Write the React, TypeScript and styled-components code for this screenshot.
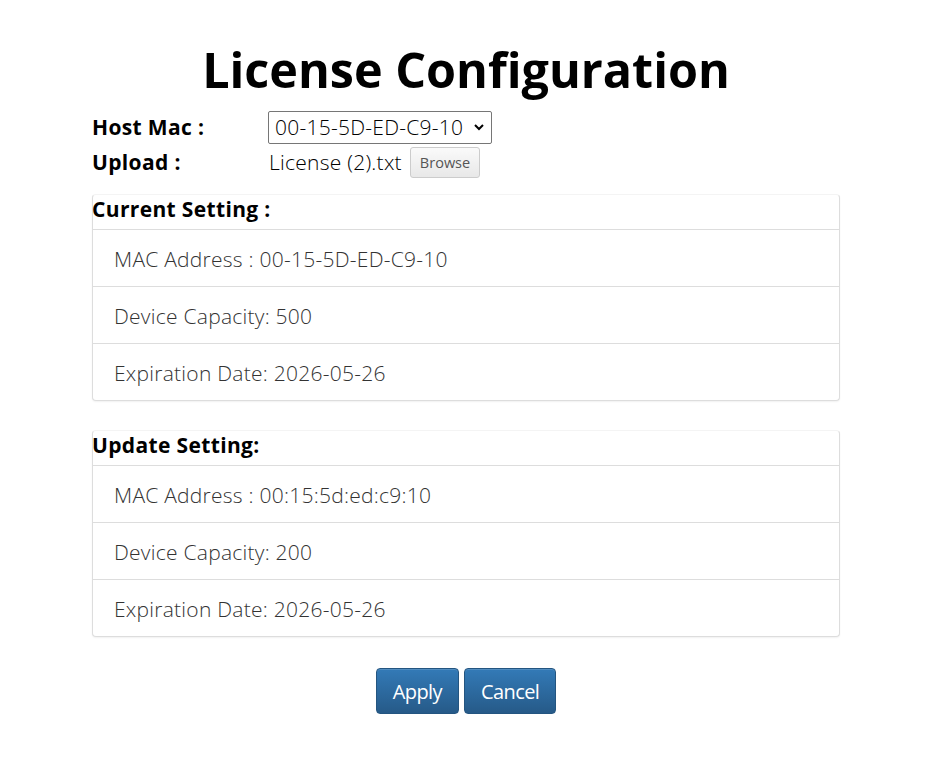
import React from "react";
import styled, { createGlobalStyle } from "styled-components";

const Global = createGlobalStyle`
  html, body { margin: 0; padding: 0; background: #fff; }
  body { font-family: "Open Sans", "Liberation Sans", sans-serif; color: #000; }
`;

const Page = styled.div`
  width: 748px;
  padding: 35px 0 40px 92px;
  display: flex;
  flex-direction: column;
`;

const Title = styled.h1`
  margin: 0;
  text-align: center;
  font-size: 48.5px;
  font-weight: 700;
  line-height: 68px;
`;

const FieldRow = styled.div<{ $h: number; $mt: number }>`
  display: grid;
  grid-template-columns: 176px 1fr;
  align-items: center;
  height: ${(p) => p.$h}px;
  margin-top: ${(p) => p.$mt}px;
`;

const Label = styled.div`
  font-size: 21px;
  font-weight: 700;
  letter-spacing: 0.35px;
`;

const Select = styled.div`
  display: inline-flex;
  align-items: center;
  justify-content: space-between;
  width: 224px;
  height: 33px;
  box-sizing: border-box;
  border: 1px solid #767676;
  border-radius: 2px;
  padding: 0 6px 0 6px;
  font-size: 21px;
  font-weight: 300;
  letter-spacing: 0.25px;
  color: #000;
`;

const FileLine = styled.div`
  display: flex;
  align-items: center;
  gap: 8px;
  font-size: 21px;
  font-weight: 300;
  letter-spacing: 0.25px;
  padding-left: 1px;
`;

const BrowseBtn = styled.button`
  font-family: "Open Sans", sans-serif;
  font-size: 14.5px;
  height: 31px;
  padding: 0 9px;
  margin-top: 2px;
  color: #555;
  background: linear-gradient(#fafafa, #e8e8e8);
  border: 1px solid #ccc;
  border-radius: 3px;
`;

const Panel = styled.div<{ $mt: number }>`
  margin-top: ${(p) => p.$mt}px;
  border: 1px solid #ddd;
  border-top-color: #f4f4f4;
  border-radius: 4px;
  box-shadow: 0 1px 2px rgba(0, 0, 0, 0.06);
  background: #fff;
`;

const PanelHeading = styled.div`
  height: 35px;
  box-sizing: border-box;
  padding-bottom: 6px;
  display: flex;
  align-items: center;
  font-size: 21px;
  font-weight: 700;
  letter-spacing: 0.35px;
  margin-left: -1px;
  border-bottom: 1px solid #ddd;
`;

const Item = styled.div`
  height: 56px;
  box-sizing: border-box;
  padding-top: 2px;
  display: flex;
  align-items: center;
  padding-left: 21px;
  font-size: 21px;
  font-weight: 300;
  letter-spacing: 0.25px;
  color: #333;
  & + & { border-top: 1px solid #ddd; height: 57px; }
`;

const Buttons = styled.div`
  display: flex;
  justify-content: center;
  gap: 5px;
  margin-top: 31px;
`;

const Btn = styled.button`
  font-family: "Open Sans", sans-serif;
  font-size: 20px;
  font-weight: 400;
  letter-spacing: -0.6px;
  color: #fff;
  height: 46px;
  padding: 0 16px;
  border: 1px solid #245580;
  border-radius: 4px;
  background: linear-gradient(#337ab7, #265a88);
  box-shadow: inset 0 1px 0 rgba(255, 255, 255, 0.15);
`;

const Chevron = () => (
  <svg width="12" height="12" viewBox="0 0 12 12">
    <path d="M2 4l4 4 4-4" fill="none" stroke="#000" strokeWidth="2" />
  </svg>
);

const SettingPanel = ({ title, mt, rows }: { title: string; mt: number; rows: string[] }) => (
  <Panel $mt={mt}>
    <PanelHeading>{title}</PanelHeading>
    {rows.map((r) => (
      <Item key={r}>{r}</Item>
    ))}
  </Panel>
);

export default function App() {
  return (
    <>
      <Global />
      <Page>
        <Title>License Configuration</Title>
        <FieldRow $h={36} $mt={6}>
          <Label>Host Mac :</Label>
          <div>
            <Select>
              <span>00-15-5D-ED-C9-10</span>
              <Chevron />
            </Select>
          </div>
        </FieldRow>
        <FieldRow $h={30} $mt={0}>
          <Label>Upload :</Label>
          <FileLine>
            <span>License (2).txt</span>
            <BrowseBtn>Browse</BrowseBtn>
          </FileLine>
        </FieldRow>
        <SettingPanel
          title="Current Setting :"
          mt={19}
          rows={[
            "MAC Address : 00-15-5D-ED-C9-10",
            "Device Capacity: 500",
            "Expiration Date: 2026-05-26",
          ]}
        />
        <SettingPanel
          title="Update Setting:"
          mt={29}
          rows={[
            "MAC Address : 00:15:5d:ed:c9:10",
            "Device Capacity: 200",
            "Expiration Date: 2026-05-26",
          ]}
        />
        <Buttons>
          <Btn>Apply</Btn>
          <Btn>Cancel</Btn>
        </Buttons>
      </Page>
    </>
  );
}
